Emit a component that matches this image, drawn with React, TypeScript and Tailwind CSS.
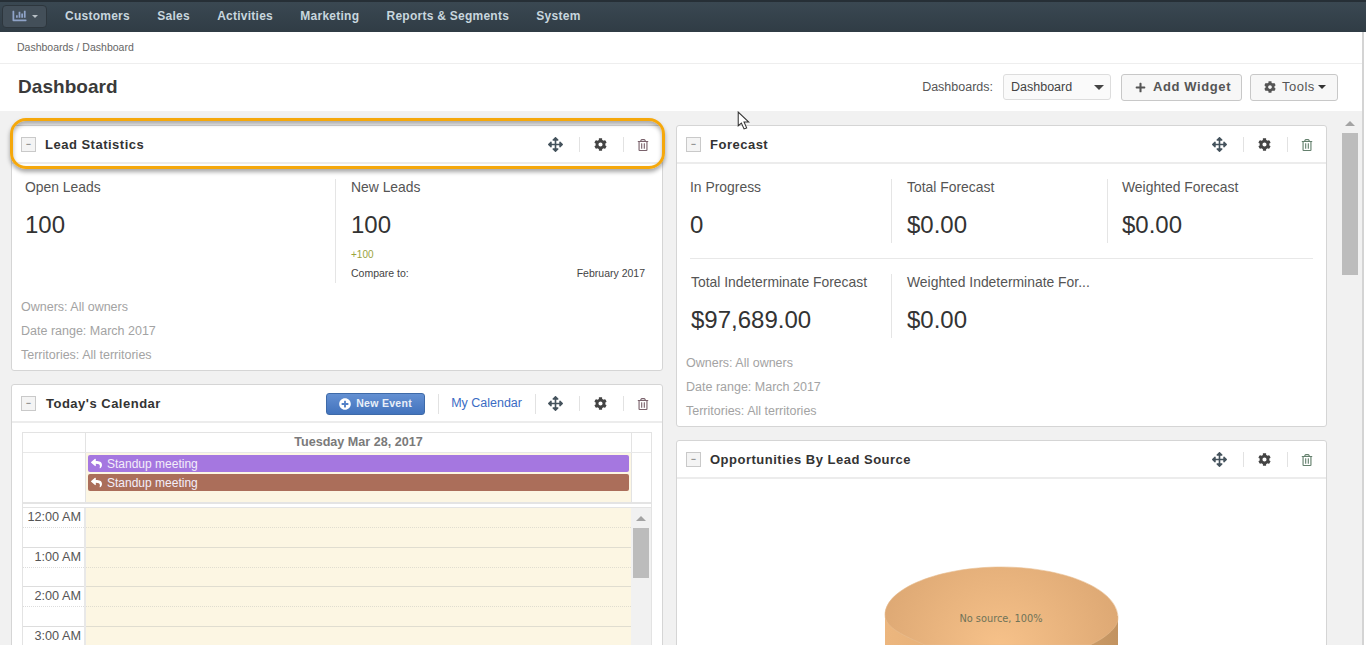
import React from 'react';
import { FaArrowsAlt, FaChartBar, FaCog, FaPlus, FaPlusCircle, FaRegTrashAlt, FaReply } from 'react-icons/fa';

const navItems = ['Customers', 'Sales', 'Activities', 'Marketing', 'Reports & Segments', 'System'];

function WidgetHeader({ title, titleMargin = 'ml-[9px]', trashColor = 'text-[#7a626c]', children }: { title: string; titleMargin?: string; trashColor?: string; children?: React.ReactNode }) {
  return (
    <div className="flex h-[38px] items-center border-b-2 border-[#ececec] pl-[9px] pr-[13px] pt-[1px]">
      <span className="flex h-[15px] w-[15px] items-center justify-center border border-[#c9c9c9] bg-[#f4f4f4] text-[9px] leading-none text-[#555]">−</span>
      <span className={`${titleMargin} text-[13px] font-bold tracking-[0.5px] text-[#333]`}>{title}</span>
      <div className="ml-auto flex items-center">
        {children}
        <FaArrowsAlt className="h-[15px] w-[15px] text-[#44525c]" />
        <span className="ml-[16px] mr-[14px] h-[15px] w-px bg-[#e2e2e2]" />
        <FaCog className="h-[13px] w-[13px] text-[#444]" />
        <span className="ml-[16px] mr-[13px] h-[15px] w-px bg-[#e2e2e2]" />
        <FaRegTrashAlt className={`h-[12px] w-[12px] ${trashColor}`} />
      </div>
    </div>
  );
}

function Stat({ label, value, className }: { label: string; value: string; className: string }) {
  return (
    <div className={className}>
      <div className="text-[13.9px] leading-[16px] text-[#555]">{label}</div>
      <div className="mt-[16px] text-[24px] leading-[28px] text-[#333]">{value}</div>
    </div>
  );
}

function Filters() {
  return (
    <div className="text-[12.5px] leading-[24px] text-[#a3a3a3]">
      <div>Owners: All owners</div>
      <div>Date range: March 2017</div>
      <div>Territories: All territories</div>
    </div>
  );
}

function Scrollbar({ arrowTop, thumbHeight, width }: { arrowTop: string; thumbHeight: string; width: string }) {
  return (
    <div className={`flex flex-col items-center bg-[#f1f1f1] ${width}`}>
      <span className={`${arrowTop} h-0 w-0 border-x-[5px] border-b-[5px] border-x-transparent border-b-[#a3a3a3]`} />
      <span className={`mt-[7px] w-[16px] bg-[#bcbcbc] ${thumbHeight}`} />
    </div>
  );
}

function TimeRow({ time }: { time: string }) {
  return (
    <div className="flex h-[39.5px]">
      <div className="w-[63px] border-r-2 border-[#e8e8e8]">
        <div className="h-[20px] border-b border-dotted border-[#ddd] pr-[3px] text-right text-[12.7px] leading-[19px] text-[#555]">{time}</div>
        <div className="h-[19.5px] border-b border-[#ddd]" />
      </div>
      <div className="flex-1 bg-[#fcf6e3]">
        <div className="h-[20px] border-b border-dotted border-[#e0ddd0]" />
        <div className="h-[19.5px] border-b border-[#e0ddd0]" />
      </div>
    </div>
  );
}

function CalendarEvent({ color }: { color: string }) {
  return (
    <div className={`flex h-[17px] items-center rounded-[2px] pl-[3px] text-[12px] text-[#f3eefa] ${color}`}>
      <FaReply className="mr-[5px] h-[11px] w-[11px] text-white" />
      Standup meeting
    </div>
  );
}

export default function App() {
  return (
    <div className="relative flex h-[645px] w-[1366px] flex-col overflow-hidden bg-white font-['Liberation_Sans',Arial,sans-serif]">
      <nav className="flex h-[32px] shrink-0 items-center border-t-2 border-[#262f36] bg-gradient-to-b from-[#3a4852] to-[#303c45] pb-[2px] pl-[2px]">
        <button className="flex h-[23px] w-[45px] items-center justify-center gap-[5px] rounded-[4px] border border-[#2d363d] bg-[#434f59]">
          <FaChartBar className="h-[14px] w-[15px] text-[#8fa3c8]" />
          <span className="h-0 w-0 border-x-[3px] border-t-[3px] border-x-transparent border-t-[#b8c0c6]" />
        </button>
        <div className="ml-[18px] flex gap-[27.3px]">
          {navItems.map((item) => (
            <span key={item} className="text-[12px] font-bold tracking-[0.25px] text-[#c8d6de]">{item}</span>
          ))}
        </div>
      </nav>

      <div className="flex min-h-0 flex-1">
        <div className="flex w-[1362px] flex-col">
          <div className="h-[32px] shrink-0 border-b border-[#eeeeee] bg-white pl-[17px] text-[10.5px] leading-[31px] text-[#666]">Dashboards / Dashboard</div>

          <header className="flex h-[47px] shrink-0 items-center bg-white pb-[1px] pl-[18px] pr-[24px]">
            <h1 className="text-[19px] font-bold tracking-[0.05px] text-[#3a3a3a]">Dashboard</h1>
            <span className="ml-auto text-[12.5px] text-[#555]">Dashboards:</span>
            <div className="ml-[10px] flex h-[26px] w-[108px] items-center justify-between rounded-[3px] border border-[#ddd] bg-[#fafafa] pl-[7px] pr-[6px] text-[12.5px] text-[#444]">
              Dashboard
              <span className="h-0 w-0 border-x-[5px] border-t-[5px] border-x-transparent border-t-[#444]" />
            </div>
            <button className="ml-[10px] flex h-[27px] w-[121px] items-center gap-[7px] rounded-[3px] border border-[#c8c8c8] bg-[#f7f7f7] pl-[13px] text-[13px] font-bold tracking-[0.6px] text-[#555]">
              <FaPlus className="h-[11px] w-[11px]" /> Add Widget
            </button>
            <button className="ml-[8px] flex h-[27px] w-[88px] items-center gap-[6px] rounded-[3px] border border-[#c8c8c8] bg-[#f7f7f7] pl-[13px] text-[13px] tracking-[0.5px] text-[#555]">
              <FaCog className="h-[12px] w-[12px]" /> Tools
              <span className="-ml-[3px] h-0 w-0 border-x-[4px] border-t-[4px] border-x-transparent border-t-[#333]" />
            </button>
          </header>

          <div className="flex min-h-0 flex-1 bg-[#f1f1f1]">
            <main className="flex w-[1337px] shrink-0 gap-[13px] overflow-hidden pl-[11px] pt-[14px]">
              <div className="flex w-[652px] shrink-0 flex-col gap-[13px]">
                <section className="h-[246px] shrink-0 rounded-[3px] border border-[#d5d5d5] bg-white">
                  <WidgetHeader title="Lead Statistics" />
                  <div className="flex h-[119px] pl-[13px] pt-[15px]">
                    <Stat label="Open Leads" value="100" className="w-[311px] border-r border-[#e5e5e5]" />
                    <div className="flex-1 pl-[15px] pr-[17px]">
                      <div className="text-[13.9px] leading-[16px] text-[#555]">New Leads</div>
                      <div className="mt-[16px] text-[24px] leading-[28px] text-[#333]">100</div>
                      <div className="mt-[8px] text-[10px] text-[#9aa33c]">+100</div>
                      <div className="mt-[4px] flex justify-between text-[10.5px] text-[#444]">
                        <span>Compare to:</span>
                        <span>February 2017</span>
                      </div>
                    </div>
                  </div>
                  <div className="pl-[9px] pt-[12px]"><Filters /></div>
                </section>

                <section className="h-[400px] shrink-0 rounded-t-[3px] border border-[#d5d5d5] bg-white">
                  <WidgetHeader title="Today's Calendar" titleMargin="ml-[10px]">
                    <button className="flex h-[22px] w-[99px] items-center justify-center gap-[5px] rounded-[3px] border border-[#3e6aa8] bg-gradient-to-b from-[#6490d2] to-[#4273bd] text-[10.5px] font-bold tracking-[0.3px] text-[#e8eff8]">
                      <FaPlusCircle className="h-[12px] w-[12px] text-white" /> New Event
                    </button>
                    <span className="ml-[13px] mr-[12px] h-[20px] w-px bg-[#e2e2e2]" />
                    <a className="text-[12.5px] text-[#3b6cc4]">My Calendar</a>
                    <span className="ml-[13px] mr-[12px] h-[20px] w-px bg-[#e2e2e2]" />
                  </WidgetHeader>
                  <div className="mx-[10px] mt-[9px] border-x border-t border-[#e3e3e3]">
                    <div className="flex h-[20px] border-b border-[#e8e8e8]">
                      <div className="w-[63px] border-r border-[#e3e3e3]" />
                      <div className="flex-1 text-center text-[12.6px] font-bold leading-[19px] text-[#7a7a7a]">Tuesday Mar 28, 2017</div>
                      <div className="w-[20px] border-l border-[#e3e3e3]" />
                    </div>
                    <div className="flex h-[51px] border-b-2 border-[#e4e4e4]">
                      <div className="w-[63px] border-r border-[#e3e3e3]" />
                      <div className="flex flex-1 flex-col gap-[2px] bg-[#fcf6e3] px-[2px] pt-[2px]">
                        <CalendarEvent color="bg-[#a577e0]" />
                        <CalendarEvent color="bg-[#ab6e5a]" />
                      </div>
                      <div className="w-[20px] border-l border-[#e3e3e3]" />
                    </div>
                    <div className="mt-[3px] flex border-t border-[#e4e4e4]">
                      <div className="flex-1">
                        {['12:00 AM', '1:00 AM', '2:00 AM', '3:00 AM'].map((time) => <TimeRow key={time} time={time} />)}
                      </div>
                      <Scrollbar arrowTop="mt-[8px]" thumbHeight="h-[50px]" width="w-[20px]" />
                    </div>
                  </div>
                </section>
              </div>

              <div className="flex w-[651px] shrink-0 flex-col gap-[13px]">
                <section className="h-[302px] shrink-0 rounded-[3px] border border-[#d5d5d5] bg-white">
                  <WidgetHeader title="Forecast" trashColor="text-[#64806d]" />
                  <div className="mx-[13px] flex h-[95px] items-start border-b border-[#e8e8e8] pt-[15px]">
                    <Stat label="In Progress" value="0" className="h-[64px] w-[202px] border-r border-[#e5e5e5]" />
                    <Stat label="Total Forecast" value="$0.00" className="h-[64px] w-[216px] border-r border-[#e5e5e5] pl-[15px]" />
                    <Stat label="Weighted Forecast" value="$0.00" className="h-[64px] pl-[14px]" />
                  </div>
                  <div className="mx-[14px] flex h-[83px] pt-[15px]">
                    <Stat label="Total Indeterminate Forecast" value="$97,689.00" className="h-[64px] w-[201px] border-r border-[#e5e5e5]" />
                    <Stat label="Weighted Indeterminate For..." value="$0.00" className="h-[64px] pl-[15px]" />
                  </div>
                  <div className="pl-[9px] pt-[9px]"><Filters /></div>
                </section>

                <section className="h-[300px] shrink-0 rounded-t-[3px] border border-[#d5d5d5] bg-white">
                  <WidgetHeader title="Opportunities By Lead Source" trashColor="text-[#64806d]" />
                  <svg viewBox="677 479 649 166" className="h-[166px] w-[649px]">
                    <defs>
                      <radialGradient id="pieTop" gradientUnits="userSpaceOnUse" cx="1000" cy="650" r="135">
                        <stop offset="0" stopColor="#f7c28a" />
                        <stop offset="1" stopColor="#dba672" />
                      </radialGradient>
                      <linearGradient id="pieSide" x1="0" y1="0" x2="1" y2="0">
                        <stop offset="0" stopColor="#ecb67e" />
                        <stop offset="0.6" stopColor="#dda871" />
                        <stop offset="1" stopColor="#c29361" />
                      </linearGradient>
                    </defs>
                    <rect x="885" y="616" width="233" height="34" fill="url(#pieSide)" />
                    <path
                      d="M885 615 C885 588 940 567 1001 567 C1062 567 1118 588 1118 618 C1118 628 1105 638 1090 645 L925 645 C905 636 885 628 885 615 Z"
                      fill="url(#pieTop)"
                      stroke="#e8bd90"
                      strokeWidth="0.6"
                    />
                    <text x="1001" y="622" textAnchor="middle" fontSize="9.8" fontFamily="'DejaVu Sans', sans-serif" fill="#6f7358">No source, 100%</text>
                  </svg>
                </section>
              </div>
            </main>

            <div className="w-[25px] pt-[10px]">
              <Scrollbar arrowTop="" thumbHeight="h-[142px]" width="w-full" />
            </div>
          </div>
        </div>
        <div className="w-[2px] bg-[#d4d4d4]" />
      </div>

      {/* orange highlight drawn over the first widget */}
      <div className="pointer-events-none absolute left-[10px] top-[118px] h-[51px] w-[655px] rounded-[16px] border-[3px] border-[#f5a80c] shadow-[0_3px_4px_rgba(0,0,0,0.35),inset_0_3px_4px_rgba(0,0,0,0.3)]" />

      {/* mouse pointer captured in the screenshot */}
      <svg viewBox="0 0 12 18" className="absolute left-[737px] top-[111px] h-[19px] w-[13px]">
        <path d="M1 1 L1 14 L4 11.5 L6.5 17 L9 16 L6.5 10.5 L11 10.5 Z" fill="#fff" stroke="#333" strokeWidth="1" />
      </svg>
    </div>
  );
}
